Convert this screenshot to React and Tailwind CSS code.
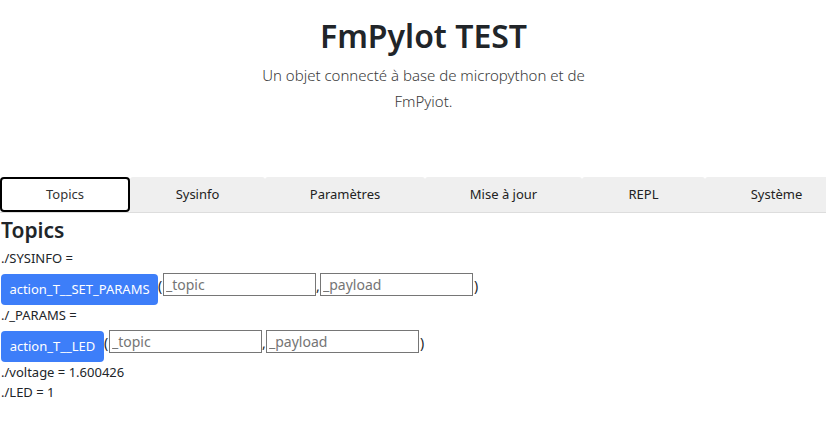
import React, { useState } from "react";

const tabs = [
  { name: "Topics", width: "w-[130px]" },
  { name: "Sysinfo", width: "w-[135px]" },
  { name: "Paramètres", width: "w-[160px]" },
  { name: "Mise à jour", width: "w-[157px]" },
  { name: "REPL", width: "w-[123px]" },
  { name: "Système", width: "w-[143px]" },
];

const ActionRow = ({ label, btnWidth }) => {
  return (
    <div className="flex items-start mt-[6px]">
      <button
        className={`${btnWidth} h-[31px] shrink-0 bg-[#3d7ef9] text-white text-[13px] rounded-[4px] whitespace-nowrap`}
      >
        {label}
      </button>
      <span className="text-[14px] leading-[24px] text-[#212529] w-[5px]">(</span>
      <input
        type="text"
        placeholder="_topic"
        className="w-[153px] h-[23px] -mt-px border border-[#767676] px-[2px] text-[14px] placeholder:text-[#757575] outline-none"
      />
      <span className="text-[14px] leading-[24px] text-[#212529] w-[4px]">,</span>
      <input
        type="text"
        placeholder="_payload"
        className="w-[153px] h-[23px] -mt-px border border-[#767676] px-[2px] text-[14px] placeholder:text-[#757575] outline-none"
      />
      <span className="text-[14px] leading-[24px] text-[#212529] pl-[1px]">)</span>
    </div>
  );
};

const App = () => {
  const [activeTab, setActiveTab] = useState("Topics");

  return (
    <div className="w-[826px] h-[424px] overflow-hidden bg-white text-[#212529] font-['Noto_Sans',sans-serif]">
      {/* header */}
      <div className="w-[847px] text-center pt-[14px]">
        <h1 className="text-[32px] leading-[43px] font-semibold">FmPylot TEST</h1>
        <p className="mt-[5px] text-[15px] leading-[26px] font-light text-[#3a3a3a]">
          Un objet connecté à base de micropython et de
          <br />
          FmPyiot.
        </p>
      </div>

      {/* tabs */}
      <div className="mt-[63px] flex w-[848px] h-[36px] bg-white border-b border-[#dddddd]">
        {tabs.map((tab) => (
          <button
            key={tab.name}
            onClick={() => setActiveTab(tab.name)}
            className={
              activeTab === tab.name
                ? `${tab.width} shrink-0 h-[35px] bg-white border-2 border-black rounded-[4px] text-[13px] text-[#333]`
                : `${tab.width} shrink-0 h-[35px] bg-[#efefef] rounded-t-[3px] text-[13px] text-[#222]`
            }
          >
            {tab.name}
          </button>
        ))}
      </div>

      {/* content */}
      <div className="px-[1px]">
        <h2 className="text-[21px] leading-[32px] font-semibold mt-[1px]">Topics</h2>
        <div className="text-[13px] leading-[20px] mt-[2px]">./SYSINFO =</div>
        <ActionRow label="action_T__SET_PARAMS" btnWidth="w-[157px]" />
        <div className="text-[13px] leading-[20px]">./_PARAMS =</div>
        <ActionRow label="action_T__LED" btnWidth="w-[103px]" />
        <div className="text-[13px] leading-[20px]">./voltage = 1.600426</div>
        <div className="text-[13px] leading-[20px]">./LED = 1</div>
      </div>
    </div>
  );
};

export default App;
